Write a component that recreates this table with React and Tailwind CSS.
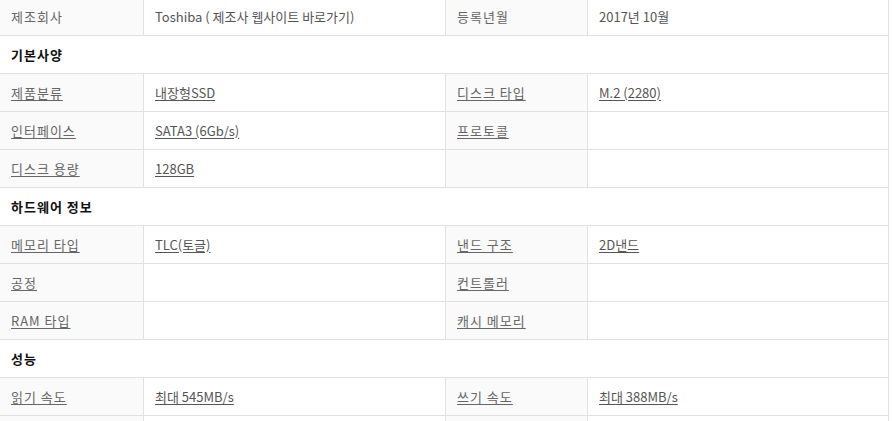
import React from "react";

const font = { fontFamily: '"Noto Sans CJK KR", "Noto Sans", sans-serif' };

function Label({ children, link }) {
  return (
    <div className="h-[37px] flex items-center pl-[11px] bg-[#fafafa] border-r border-[#e1e1e1] text-[13px] tracking-[1px] text-[#666]">
      {children ? (
        <span className={link ? "underline underline-offset-2" : ""}>{children}</span>
      ) : null}
    </div>
  );
}

function Value({ children, link }) {
  return (
    <div className="h-[37px] flex items-center pl-[11px] bg-white border-r border-[#e1e1e1] text-[13px] text-[#555]">
      {children ? (
        <span className={link ? "underline underline-offset-2" : ""}>{children}</span>
      ) : null}
    </div>
  );
}

function Row({ cells }) {
  return (
    <div className="grid grid-cols-[144px_302px_142px_301px] border-b border-[#e1e1e1]">
      <Label link={cells[0][1]}>{cells[0][0]}</Label>
      <Value link={cells[1][1]}>{cells[1][0]}</Value>
      <Label link={cells[2][1]}>{cells[2][0]}</Label>
      <Value link={cells[3][1]}>{cells[3][0]}</Value>
    </div>
  );
}

function Header({ children }) {
  return (
    <div className="h-[38px] flex items-center pl-[11px] border-b border-r border-[#e1e1e1] bg-white text-[13px] tracking-[1px] font-bold text-[#111]">
      {children}
    </div>
  );
}

export default function App() {
  return (
    <div className="w-[892px] h-[421px] overflow-hidden bg-white" style={font}>
      <div className="w-[889px] -mt-[2px]">
        <Row
          cells={[
            ["제조회사", false],
            ["Toshiba ( 제조사 웹사이트 바로가기)", false],
            ["등록년월", false],
            ["2017년 10월", false],
          ]}
        />
        <Header>기본사양</Header>
        <Row
          cells={[
            ["제품분류", true],
            ["내장형SSD", true],
            ["디스크 타입", true],
            ["M.2 (2280)", true],
          ]}
        />
        <Row
          cells={[
            ["인터페이스", true],
            ["SATA3 (6Gb/s)", true],
            ["프로토콜", true],
            ["", false],
          ]}
        />
        <Row
          cells={[
            ["디스크 용량", true],
            ["128GB", true],
            ["", false],
            ["", false],
          ]}
        />
        <Header>하드웨어 정보</Header>
        <Row
          cells={[
            ["메모리 타입", true],
            ["TLC(토글)", true],
            ["낸드 구조", true],
            ["2D낸드", true],
          ]}
        />
        <Row
          cells={[
            ["공정", true],
            ["", false],
            ["컨트롤러", true],
            ["", false],
          ]}
        />
        <Row
          cells={[
            ["RAM 타입", true],
            ["", false],
            ["캐시 메모리", true],
            ["", false],
          ]}
        />
        <Header>성능</Header>
        <Row
          cells={[
            ["읽기 속도", true],
            ["최대 545MB/s", true],
            ["쓰기 속도", true],
            ["최대 388MB/s", true],
          ]}
        />
        <Row
          cells={[
            ["", false],
            ["", false],
            ["", false],
            ["", false],
          ]}
        />
      </div>
    </div>
  );
}
